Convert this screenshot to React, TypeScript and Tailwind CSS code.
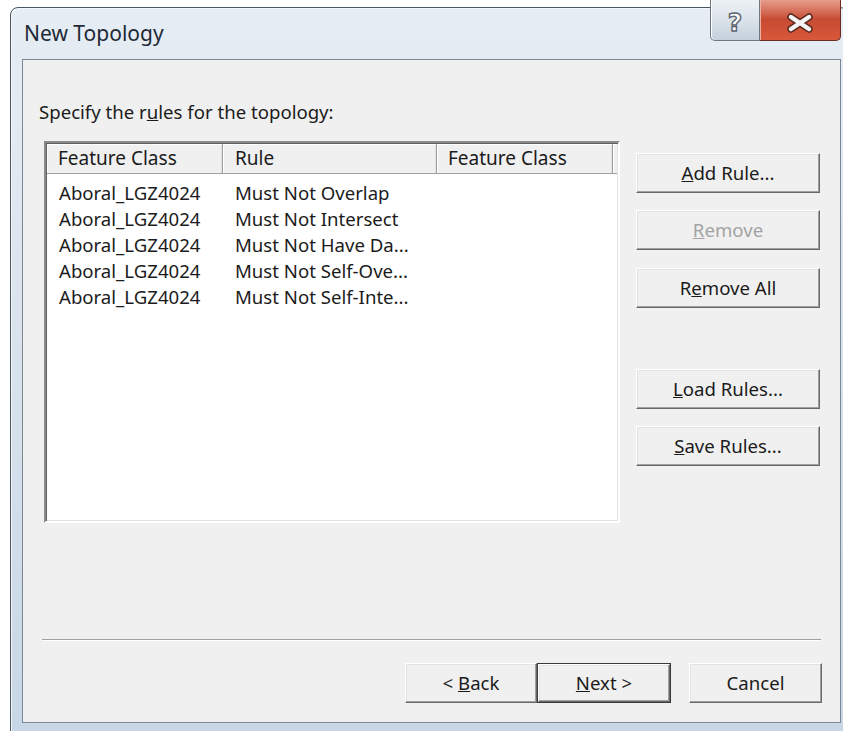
const rules = [
  ['Aboral_LGZ4024', 'Must Not Overlap'],
  ['Aboral_LGZ4024', 'Must Not Intersect'],
  ['Aboral_LGZ4024', 'Must Not Have Da...'],
  ['Aboral_LGZ4024', 'Must Not Self-Ove...'],
  ['Aboral_LGZ4024', 'Must Not Self-Inte...'],
]

function Btn({
  children,
  w = 'w-[184px]',
  disabled = false,
  isDefault = false,
}: {
  children: React.ReactNode
  w?: string
  disabled?: boolean
  isDefault?: boolean
}) {
  return (
    <div className={`${w} h-[40px] ${isDefault ? 'border border-[#3a3a3a]' : ''}`}>
      <button
        className={`w-full h-full flex items-center justify-center bg-[#f0f0f0] border border-t-white border-l-white border-b-[#696969] border-r-[#696969] shadow-[inset_-1px_-1px_0_#a0a0a0,inset_1px_1px_0_#e3e3e3] ${
          disabled ? 'text-[#a3a3a3]' : 'text-[#1b1b1b]'
        }`}
      >
        {children}
      </button>
    </div>
  )
}

function HeaderCell({ label, w, pl }: { label: string; w: string; pl: string }) {
  return (
    <div
      className={`${w} ${pl} h-full flex items-center bg-[#f0f0f0] border-r border-r-[#a0a0a0] shadow-[inset_1px_1px_0_#ffffff,inset_-1px_0_0_#e0e0e0]`}
    >
      {label}
    </div>
  )
}

export default function App() {
  return (
    <div
      className="w-[843px] h-[731px] bg-white overflow-hidden text-[18.6px] text-[#1b1b1b]"
      style={{ fontFamily: '"Noto Sans", "Open Sans", sans-serif' }}
    >
      {/* window frame */}
      <div className="ml-[10px] mt-[7px] w-[838px] h-[740px] rounded-t-[8px] border border-[#4a5562] bg-gradient-to-b from-[#e6edf4] via-[#d8e2ec] to-[#c7d6e6] pl-[11px] shadow-[inset_1px_1px_0_#f5f8fb]">
        {/* title bar */}
        <div className="h-[51px] flex items-start">
          <div className="flex-1 h-full flex items-center pl-[2px] text-[21px] text-[#1e2a36]">
            New Topology
          </div>
          <div className="-mt-[9px] mr-[6px] h-[42px] flex">
            <div className="w-[50px] h-full rounded-bl-[5px] border border-t-0 border-[#6f7780] bg-gradient-to-b from-[#eef2f6] via-[#dbe3ea] to-[#c5d0db] shadow-[inset_1px_0_0_#ffffff] flex items-center justify-center">
              <span
                className="text-[25px] font-bold text-white leading-none mt-[6px]"
                style={{ WebkitTextStroke: '1.4px #5b6470', fontFamily: '"DejaVu Sans", sans-serif' }}
              >
                ?
              </span>
            </div>
            <div className="w-[81px] h-full rounded-br-[5px] border border-t-0 border-l-0 border-[#6b2a22] bg-gradient-to-b from-[#e8a090] via-[#c74a33] to-[#d8583a] shadow-[inset_1px_0_0_#f0b0a0] flex items-center justify-center">
              <svg width="28" height="20" viewBox="0 0 28 20" className="mt-[6px]">
                <path
                  d="M5 4 L23 16 M23 4 L5 16"
                  stroke="#5a2a20"
                  strokeWidth="7.5"
                  strokeLinecap="round"
                />
                <path
                  d="M5 4 L23 16 M23 4 L5 16"
                  stroke="#f4f4f4"
                  strokeWidth="4.5"
                  strokeLinecap="round"
                />
              </svg>
            </div>
          </div>
        </div>

        {/* client area */}
        <div className="w-[819px] h-[664px] border border-[#7c8794] bg-[#f0f0f0]">
          <div className="pl-[16px] pt-[40px] leading-[24px]">
            Specify the r<u>u</u>les for the topology:
          </div>

          <div className="mt-[17px] pl-[21px] flex">
            {/* rules list */}
            <div className="w-[576px] h-[382px] border-2 border-t-[#8a8a8a] border-l-[#8a8a8a] border-b-white border-r-white shadow-[inset_1px_1px_0_#5e5e5e,inset_-1px_-1px_0_#e3e3e3] bg-white p-[1px] flex flex-col">
              <div className="h-[30px] flex shrink-0 border-b border-b-[#a0a0a0] text-[19px]">
                <HeaderCell label="Feature Class" w="w-[176px]" pl="pl-[11px]" />
                <HeaderCell label="Rule" w="w-[214px]" pl="pl-[12px]" />
                <HeaderCell label="Feature Class" w="w-[176px]" pl="pl-[11px]" />
                <div className="flex-1 h-full bg-[#f0f0f0] shadow-[inset_1px_1px_0_#ffffff]" />
              </div>
              <div className="pt-[6px]">
                {rules.map(([fc, rule], i) => (
                  <div key={i} className="h-[26px] flex items-center">
                    <div className="w-[176px] pl-[12px] whitespace-nowrap">{fc}</div>
                    <div className="w-[214px] pl-[12px] whitespace-nowrap">{rule}</div>
                  </div>
                ))}
              </div>
            </div>

            {/* side buttons */}
            <div className="ml-[16px] pt-[12px] flex flex-col">
              <Btn>
                <span>
                  <u>A</u>dd Rule...
                </span>
              </Btn>
              <div className="mt-[17px]">
                <Btn disabled>
                  <span>
                    <u>R</u>emove
                  </span>
                </Btn>
              </div>
              <div className="mt-[18px]">
                <Btn>
                  <span>
                    R<u>e</u>move All
                  </span>
                </Btn>
              </div>
              <div className="mt-[61px]">
                <Btn>
                  <span>
                    <u>L</u>oad Rules...
                  </span>
                </Btn>
              </div>
              <div className="mt-[17px]">
                <Btn>
                  <span>
                    <u>S</u>ave Rules...
                  </span>
                </Btn>
              </div>
            </div>
          </div>

          {/* separator */}
          <div className="mt-[116px] ml-[19px] w-[779px] h-[2px] border-t border-t-[#a0a0a0] border-b border-b-white" />

          {/* wizard buttons */}
          <div className="mt-[22px] ml-[382px] flex">
            <Btn w="w-[132px]">
              <span>
                &lt; <u>B</u>ack
              </span>
            </Btn>
            <Btn w="w-[134px]" isDefault>
              <span>
                <u>N</u>ext &gt;
              </span>
            </Btn>
            <div className="ml-[18px]">
              <Btn w="w-[133px]">Cancel</Btn>
            </div>
          </div>
        </div>
      </div>
    </div>
  )
}
